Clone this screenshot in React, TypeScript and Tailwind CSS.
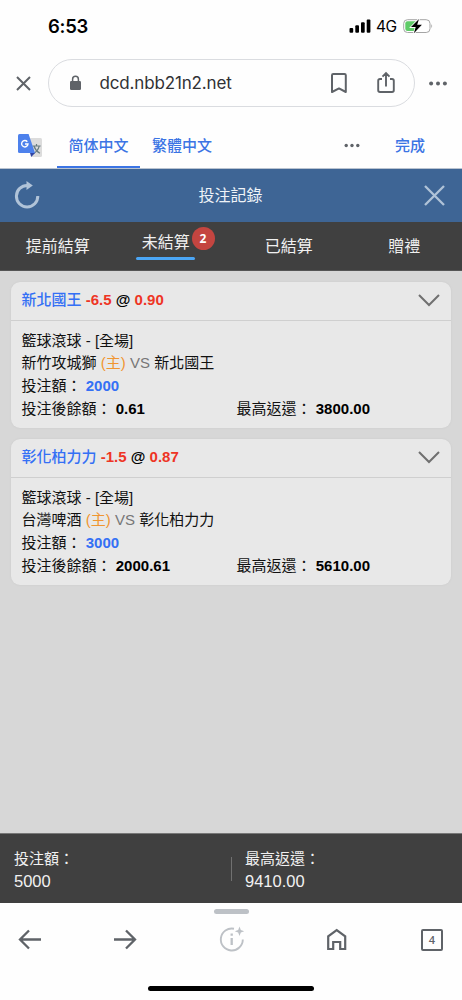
import React from 'react';

const cjk = "font-['Liberation_Sans','Noto_Sans_CJK_TC',sans-serif]";

const bets = [
  { pick: '新北國王', line: '-6.5', odds: '0.90', home: '新竹攻城獅', away: '新北國王', stake: '2000', balance: '0.61', payout: '3800.00' },
  { pick: '彰化柏力力', line: '-1.5', odds: '0.87', home: '台灣啤酒', away: '彰化柏力力', stake: '3000', balance: '2000.61', payout: '5610.00' },
];

function StatusBar() {
  return (
    <div className="flex h-[52px] shrink-0 items-center pl-[48px] pr-[29px] font-['Inter',sans-serif] text-black">
      <span className="text-[18.5px] font-semibold leading-none tracking-[-0.25px]">6:53</span>
      <svg className="ml-auto" width="22" height="14" viewBox="0 0 22 14">
        <rect x="0.5" y="9" width="3.7" height="4.8" rx="1" />
        <rect x="6.3" y="6.3" width="3.7" height="7.5" rx="1" />
        <rect x="12" y="3.3" width="3.7" height="10.5" rx="1" />
        <rect x="17.7" y="0.4" width="3.7" height="13.4" rx="1" />
      </svg>
      <span className="ml-[5px] mt-px w-[22px] whitespace-nowrap text-[15.5px] leading-none tracking-[-0.4px]">4G</span>
      <svg className="ml-[5px] mr-[-1px]" width="31" height="18" viewBox="0 0 31 18">
        <rect x="0.7" y="2.7" width="26.3" height="12.8" rx="3.8" fill="#fff" stroke="#a5a5a5" />
        <path d="M4.5 4.2H14V14H4.5Q2.3 14 2.3 11.8V6.4Q2.3 4.2 4.5 4.2Z" fill="#5fcb68" />
        <path d="M28.4 7q1.7 2 0 4.3z" fill="#999" />
        <path d="M16 1.9 8 10.1h4.7l-1.8 6.2 8-8.5h-4.7z" fill="#000" stroke="#fff" strokeWidth="1.6" paintOrder="stroke" />
      </svg>
    </div>
  );
}

function AddressBar() {
  return (
    <div className="flex h-[62px] shrink-0 items-center pl-[16px] pr-[15px] text-[#5f6368]">
      <svg width="15" height="15" viewBox="0 0 15 15" fill="none" stroke="currentColor" strokeWidth="2"><path d="m1 1 13 13M14 1 1 14" /></svg>
      <div className="ml-[16.5px] flex h-[48px] w-[367px] items-center rounded-full border border-[#dadce0] pl-[20px] pr-[19px]">
        <svg width="13" height="16" viewBox="0 0 13 16">
          <rect x="1" y="6" width="11" height="9" rx="1.3" fill="currentColor" />
          <path d="M3.6 7V4.2a2.900 2.900 0 0 1 5.800 0V7" fill="none" stroke="currentColor" strokeWidth="1.500" />
        </svg>
        <span className="ml-[18px] mt-px whitespace-nowrap font-['Inter',sans-serif] text-[17px] leading-none tracking-[-0.15px] text-[#303134]">dcd.nbb21n2.net</span>
        <svg className="ml-auto" width="18" height="22" viewBox="0 0 18 22" fill="none" stroke="currentColor" strokeWidth="2" strokeLinejoin="round"><path d="M2 20V3.3Q2 2 3.3 2h11.2q1.3 0 1.3 1.300V20L9 16.400z" /></svg>
        <svg className="ml-[29px]" width="18" height="24" viewBox="0 0 18 24" fill="none" stroke="currentColor" strokeWidth="1.900"><path d="M5 8H3Q1.200 8 1.200 9.800v9.500Q1.200 21 3 21h12q1.800 0 1.800-1.700V9.800Q16.800 8 15 8h-2M9 15.500V2.500M5.500 5.700 9 2.200l3.500 3.500" /></svg>
      </div>
      <svg className="ml-auto" width="18" height="5" viewBox="0 0 18 5" fill="currentColor"><circle cx="2.1" cy="2.5" r="2" /><circle cx="9" cy="2.5" r="2" /><circle cx="15.9" cy="2.5" r="2" /></svg>
    </div>
  );
}

function TranslateBar() {
  return (
    <div className="flex h-[55px] shrink-0 items-stretch border-b border-[#b9c3d0] pl-[18px] font-['Noto_Sans_CJK_SC',sans-serif] text-[15px] font-medium text-[#3b74e4]">
      <svg className="mt-[20px]" width="25" height="25" viewBox="0 0 25 25">
        <path d="M10 4h12.500Q24 4 24 5.500v16q0 1.500-1.500 1.500H14z" fill="#dcdcdc" />
        <path d="M14.400 12h8.200M18.500 10v2M16 12.200q1.600 4.600 5.900 7M21.200 12.200q-1.200 5-5.700 7.300" fill="none" stroke="#667b80" strokeWidth="1.200" />
        <path d="M12 19h5l-3.800 4z" fill="#3045a4" />
        <path d="M1.500 0h9.100l6.400 19H1.500Q0 19 0 17.500V1.500Q0 0 1.500 0z" fill="#4d81ec" />
        <path d="M9.300 7.700A3.200 3.200 0 1 0 10 10H7" fill="none" stroke="#fff" strokeWidth="1.400" />
      </svg>
      <div className="ml-[14px] flex w-[83px] flex-col items-center border-b-2 border-[#3b74e4] pt-[20px] leading-[22px]">简体中文</div>
      <div className="ml-[12px] pt-[20px] leading-[22px]">繁體中文</div>
      <svg className="ml-auto mt-[29px]" width="16" height="5" viewBox="0 0 16 5" fill="#5f6368"><circle cx="2.2" cy="2.5" r="1.7" /><circle cx="8" cy="2.5" r="1.7" /><circle cx="13.8" cy="2.5" r="1.7" /></svg>
      <div className="ml-[35px] mr-[37px] pt-[20px] leading-[22px]">完成</div>
    </div>
  );
}

function BetCard({ bet }: { bet: (typeof bets)[number] }) {
  return (
    <section className="h-[146px] rounded-[9px] bg-[#e8e8e8] text-[15px] text-[#111] shadow-[0_0_2px_#c8c8c8]">
      <div className="flex h-[39px] items-center justify-between border-b border-[#cfcfcf] pl-[11px] pr-[11px]">
        <div className="whitespace-nowrap font-bold text-black">
          <span className="font-medium text-[#3470f5]">{bet.pick}</span> <span className="text-[#ee3525]">{bet.line}</span> @ <span className="text-[#ee3525]">{bet.odds}</span>
        </div>
        <svg width="22" height="13" viewBox="0 0 22 13" fill="none" stroke="#707070" strokeWidth="2"><path d="m1 1 10 10L21 1" /></svg>
      </div>
      <div className="flex flex-col pl-[11px] pt-[9px] leading-[22.700px]">
        <div>籃球滾球 - [全場]</div>
        <div>{bet.home} <span className="text-[#f09530]">(主)</span> <span className="text-[#777]">VS</span> {bet.away}</div>
        <div>投注額： <b className="text-[#3470f5]">{bet.stake}</b></div>
        <div className="flex">
          <div className="w-[215px]">投注後餘額： <b className="text-black">{bet.balance}</b></div>
          <div>最高返還： <b className="text-black">{bet.payout}</b></div>
        </div>
      </div>
    </section>
  );
}

function BrowserNav() {
  return (
    <footer className="flex h-[97px] shrink-0 flex-col items-center bg-[#fefefe] text-[#5f6368]">
      <div className="mt-[6px] h-[5px] w-[35px] rounded-full bg-[#bdc1c6]" />
      <div className="mt-[10px] flex h-[30px] w-full items-center pl-[18px]">
        <svg width="24" height="24" viewBox="0 0 24 24" fill="none" stroke="currentColor" strokeWidth="2.300"><path d="M23 12.500H2M11 3.500l-9 9 9 9" /></svg>
        <svg className="ml-[71px]" width="24" height="24" viewBox="0 0 24 24" fill="none" stroke="currentColor" strokeWidth="2.300"><path d="M1 12.500h21M13 3.500l9 9-9 9" /></svg>
        <svg className="ml-[82px]" width="26" height="26" viewBox="0 0 26 26" fill="none" stroke="#bdc1c6" strokeWidth="1.900"><path d="M15 2.700A11 11 0 1 0 23.800 13.500" /><path d="M12.700 12v7M12.700 7.500v2.200" strokeWidth="2.300" /><path d="m20.500.5 1.300 3.400 3.400 1.300-3.400 1.300-1.300 3.400-1.300-3.400-3.400-1.300 3.400-1.300z" fill="#bdc1c6" stroke="none" /></svg>
        <svg className="ml-[81px]" width="22" height="24" viewBox="0 0 22 24" fill="none" stroke="currentColor" strokeWidth="2.200"><path d="M2.200 22V9.300L10.700 3l8.500 6.300V22h-5v-7h-7v7z" /></svg>
        <div className="ml-[73px] mt-px flex h-[22px] w-[22px] items-center justify-center rounded-[2px] border-2 border-current font-['Open_Sans',sans-serif] text-[11px] font-semibold leading-none">4</div>
      </div>
      <div className="mt-[32px] h-[5px] w-[166px] rounded-full bg-black" />
    </footer>
  );
}

export default function App() {
  return (
    <main className={`flex h-[1000px] w-[462px] flex-col overflow-hidden bg-[#fefefe] ${cjk}`}>
      <StatusBar />
      <AddressBar />
      <TranslateBar />
      <header className="flex h-[53px] shrink-0 items-center justify-between bg-[#3e6595] pl-[14px] pr-[17px] text-[#b0c3d8]">
        <svg className="mt-[-1px]" width="26" height="28" viewBox="0 0 26 28" fill="none" stroke="currentColor" strokeWidth="3"><path d="M13.500 4.500A10.700 10.700 0 1 0 23.800 15" /><path d="m12.500 0 6.300 4.600-6.300 4.500z" fill="currentColor" stroke="none" /></svg>
        <h1 className="ml-[-3px] mt-px text-[16px] text-[#eef3f8]">投注記錄</h1>
        <svg width="21" height="21" viewBox="0 0 21 21" fill="none" stroke="currentColor" strokeWidth="2.300"><path d="m1 1 19 19M20 1 1 20" /></svg>
      </header>
      <nav className="grid h-[49px] shrink-0 grid-cols-4 border-b border-[#555] bg-[#404040] text-center text-[16px] leading-[50px] text-[#f0f0f0]">
        <div>提前結算</div>
        <div className="relative flex flex-col items-center pr-[15px]">
          <span className="mt-[7px] leading-[28px]">未結算</span>
          <span className="h-[3px] w-[59px] rounded-full bg-[#4ba6f5]" />
          <span className="absolute left-[76px] top-[5px] flex h-[23px] w-[23px] items-center justify-center rounded-full bg-[#c44540] font-['Open_Sans',sans-serif] text-[12px] font-bold leading-none text-white">2</span>
        </div>
        <div>已結算</div>
        <div>贈禮</div>
      </nav>
      <div className="flex flex-1 flex-col gap-[11px] bg-[#d7d7d7] pl-[10.600px] pr-[11px] pt-[10.500px]">
        {bets.map((bet) => <BetCard key={bet.pick} bet={bet} />)}
      </div>
      <div className="flex h-[70px] shrink-0 items-center border-t border-[#777] bg-[#404040] text-[#f1f1f1]">
        <div className="w-[231px] pl-[14px] pt-[3px] text-[15px] leading-[22px]"><div>投注額：</div><div className="text-[16.500px]">5000</div></div>
        <div className="h-[24px] w-px bg-[#707070]" />
        <div className="pl-[13px] pt-[3px] text-[15px] leading-[22px]"><div>最高返還：</div><div className="text-[16.500px]">9410.00</div></div>
      </div>
      <BrowserNav />
    </main>
  );
}
